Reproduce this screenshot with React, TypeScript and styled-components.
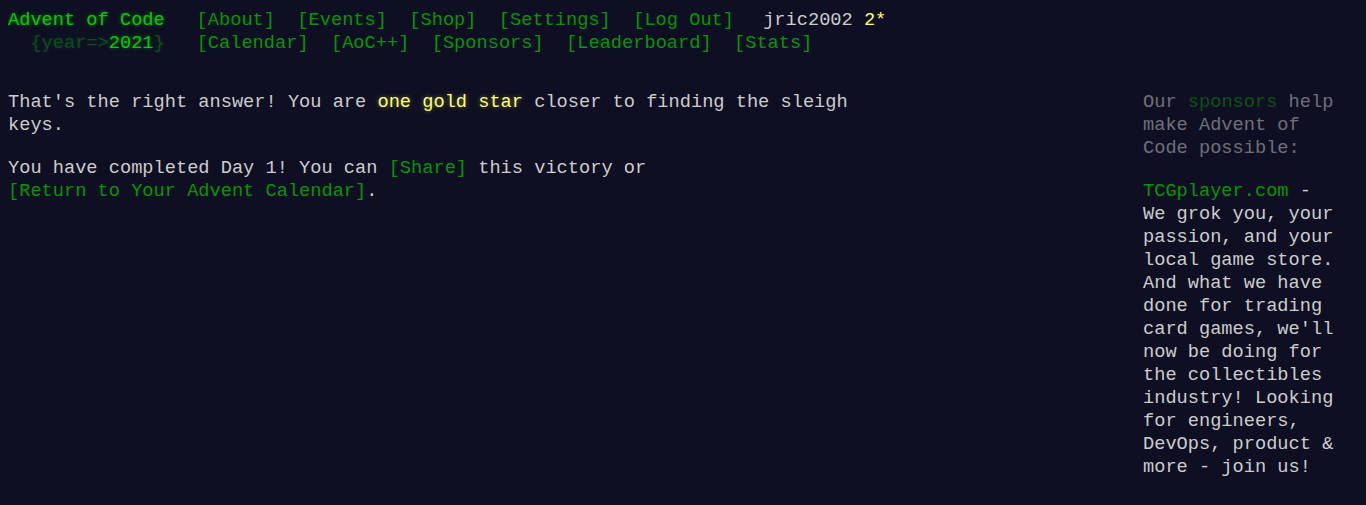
import React from "react";
import styled, { createGlobalStyle } from "styled-components";

const GlobalStyle = createGlobalStyle`
  html, body { background: #0f0f23; }
  body {
    margin: 9px 8px 8px;
    color: #cccccc;
    font-family: "Liberation Mono", "DejaVu Sans Mono", monospace;
    font-size: 14pt;
    line-height: 23px;
  }
`;

const Header = styled.header`
  white-space: nowrap;
  margin-bottom: 36px;
`;

const HeaderRow = styled.div`
  display: flex;
  align-items: baseline;
  height: 23px;
`;

const Title = styled.h1`
  margin: 0;
  padding-right: calc(1em + 2px);
  font-size: 1em;
  font-weight: normal;
  white-space: pre;
`;

const Glow = styled.a<{ $faded?: boolean }>`
  color: #00cc00;
  text-decoration: none;
  text-shadow: 0 0 3px rgba(0, 204, 0, 0.35), 0 0 6px rgba(0, 204, 0, 0.3);
  opacity: ${(p) => (p.$faded ? 0.33 : 1)};
`;

const NavList = styled.ul`
  list-style: none;
  display: flex;
  margin: 0;
  padding: 0;
`;

const NavItem = styled.li`
  padding: 0 0.6em;
`;

const Link = styled.a<{ $nowrap?: boolean }>`
  color: #009900;
  text-decoration: none;
  white-space: ${(p) => (p.$nowrap ? "nowrap" : "normal")};
`;

const User = styled.div`
  padding-left: 18px;
`;

const Star = styled.span`
  color: #ffff66;
`;

const Content = styled.div`
  display: flex;
  justify-content: space-between;
  align-items: flex-start;
`;

const Article = styled.article`
  width: 45em;
`;

const P = styled.p`
  margin: 0 0 20px;
`;

const GoldStar = styled.em`
  font-style: normal;
  color: #ffff66;
  text-shadow: 0 0 5px rgba(255, 255, 102, 0.4);
`;

const Sidebar = styled.aside`
  width: 200px;
  margin-right: 15px;
`;

const Quiet = styled.div`
  opacity: 0.5;
  margin-bottom: 20px;
`;

const topNav = ["[About]", "[Events]", "[Shop]", "[Settings]", "[Log Out]"];
const bottomNav = ["[Calendar]", "[AoC++]", "[Sponsors]", "[Leaderboard]", "[Stats]"];

export default function App() {
  return (
    <>
      <GlobalStyle />
      <Header>
        <HeaderRow>
          <Title>
            <Glow href="#">Advent of Code</Glow>
          </Title>
          <nav>
            <NavList>
              {topNav.map((t) => (
                <NavItem key={t}>
                  <Link href="#">{t}</Link>
                </NavItem>
              ))}
            </NavList>
          </nav>
          <User>
            jric2002 <Star>2*</Star>
          </User>
        </HeaderRow>
        <HeaderRow>
          <Title>
            {"  "}
            <Glow as="span" $faded>
              {"{year=>"}
            </Glow>
            <Glow href="#">2021</Glow>
            <Glow as="span" $faded>
              {"}"}
            </Glow>
          </Title>
          <nav>
            <NavList>
              {bottomNav.map((t) => (
                <NavItem key={t}>
                  <Link href="#">{t}</Link>
                </NavItem>
              ))}
            </NavList>
          </nav>
        </HeaderRow>
      </Header>
      <Content>
        <main>
          <Article>
            <P>
              That's the right answer! You are <GoldStar>one gold star</GoldStar> closer to finding the
              sleigh keys.
            </P>
            <P>
              You have completed Day 1! You can <Link href="#">[Share]</Link> this victory or{" "}
              <Link href="#" $nowrap>
                [Return to Your Advent Calendar]
              </Link>
              .
            </P>
          </Article>
        </main>
        <Sidebar>
          <Quiet>
            Our <Link href="#">sponsors</Link> help make Advent of Code possible:
          </Quiet>
          <div>
            <Link href="#">TCGplayer.com</Link> - We grok you, your passion, and your local game store.
            And what we have done for trading card games, we'll now be doing for the collectibles
            industry! Looking for engineers, DevOps, product &amp; more - join us!
          </div>
        </Sidebar>
      </Content>
    </>
  );
}
